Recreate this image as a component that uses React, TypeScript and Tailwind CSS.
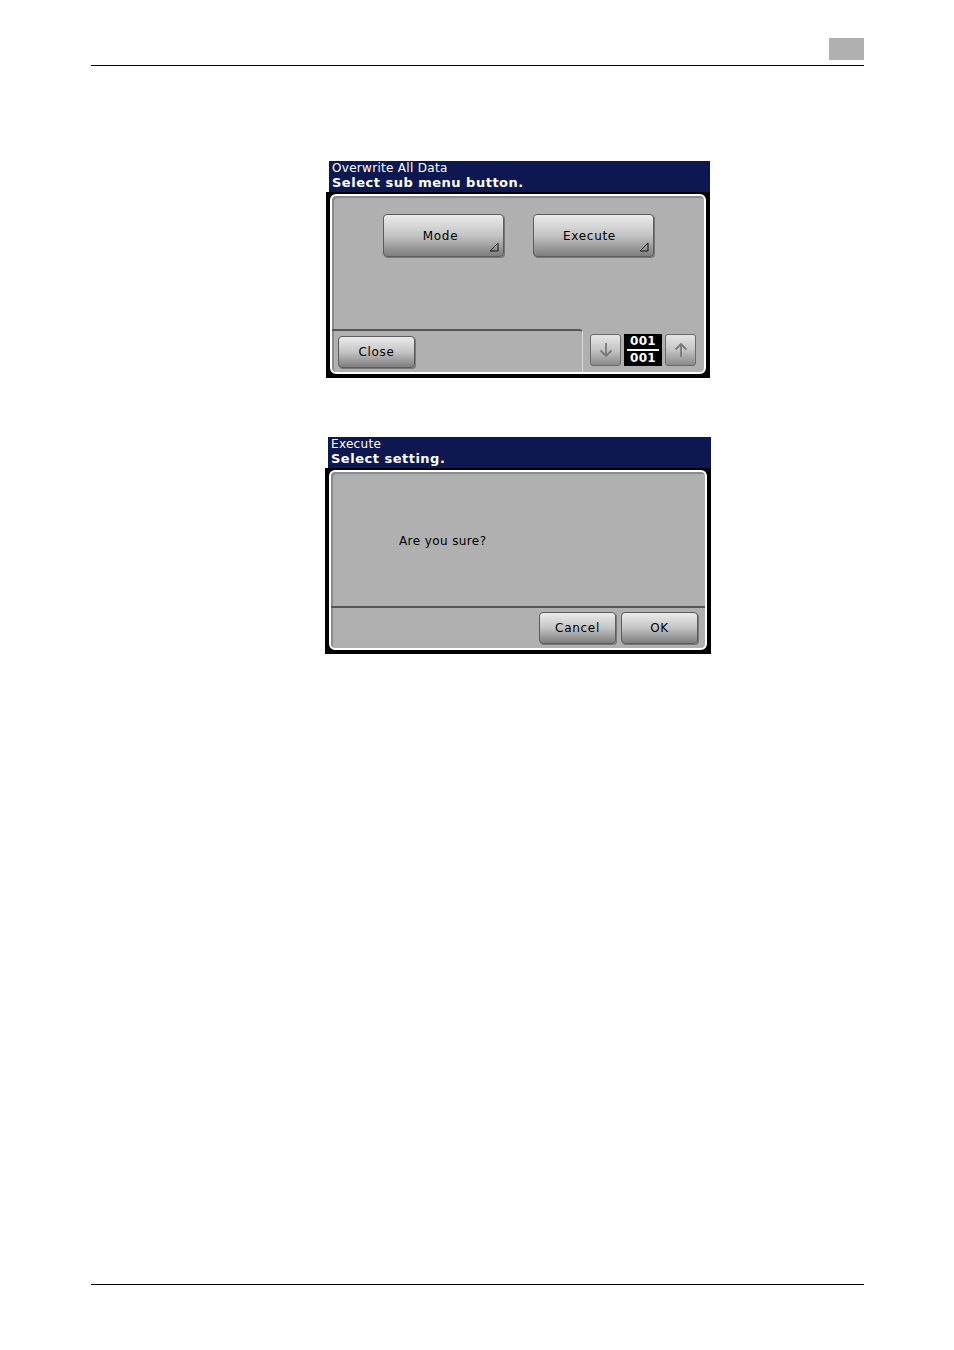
import React from 'react';

const font = { fontFamily: '"DejaVu Sans", Verdana, sans-serif' };

function Corner() {
  return (
    <svg width="10" height="10" viewBox="0 0 10 10" className="absolute right-[4px] bottom-[4px]">
      <polygon points="9,1 9,9 1,9" fill="none" stroke="#111" strokeWidth="1" />
    </svg>
  );
}

function Btn({ label, w, h, corner, className = '' }: { label: string; w: string; h: string; corner?: boolean; className?: string }) {
  return (
    <div
      className={`relative flex items-center justify-center rounded-[4px] border border-[#5c5c5c] bg-gradient-to-b from-[#ebebeb] via-[#c4c4c4] to-[#7e7e7e] text-[12px] tracking-[0.7px] text-black shadow-[1px_1px_0_#777] ${w} ${h} ${className}`}
    >
      {label}
      {corner && <Corner />}
    </div>
  );
}

function Arrow({ up }: { up?: boolean }) {
  return (
    <div className="flex h-[32px] w-[31px] items-center justify-center rounded-[3px] border border-[#6a6a6a] bg-gradient-to-b from-[#e6e6e6] via-[#c4c4c4] to-[#8a8a8a]">
      <svg width="14" height="16" viewBox="0 0 14 16" className={up ? 'rotate-180' : ''}>
        <path d="M7 1 V14 M1.5 8.5 L7 14 L12.5 8.5" fill="none" stroke="#7a7a7a" strokeWidth="1.8" />
      </svg>
    </div>
  );
}

function Title({ small, big }: { small: string; big: string }) {
  return (
    <div className="ml-[3px] h-[31px] bg-[#0e1850] px-[3px] pt-[1px] text-white">
      <div className="text-[12px] leading-[13px] tracking-[0.3px]">{small}</div>
      <div className="text-[13px] font-bold leading-[16px] tracking-[0.5px]">{big}</div>
    </div>
  );
}

function Frame({ children }: { children: React.ReactNode }) {
  return (
    <div className="bg-black pt-[2px] pr-[4px] pb-[4px] pl-[4px]">
      <div className="h-[180px] overflow-hidden rounded-[6px] border-2 border-white bg-[#b0b0b0] shadow-[inset_2px_2px_1px_#8a8a8a]">
        {children}
      </div>
    </div>
  );
}

export default function App() {
  return (
    <div className="flex h-[1350px] w-[954px] flex-col bg-white" style={font}>
      <div className="mx-[90px] ml-[91px] flex h-[66px] justify-end border-b border-black pt-[38px]">
        <div className="h-[22px] w-[35px] bg-[#b0b0b0]" />
      </div>

      <div className="ml-[326px] mt-[95px] w-[384px]">
        <Title small="Overwrite All Data" big="Select sub menu button." />
        <Frame>
          <div className="flex h-[133px] gap-[29px] pl-[51px] pt-[18px]">
            <Btn label="Mode" w="w-[121px]" h="h-[43px]" corner className="pr-[6px]" />
            <Btn label="Execute" w="w-[121px]" h="h-[43px]" corner className="pr-[8px]" />
          </div>
          <div className="flex h-[43px]">
            <div className="w-[251px] rounded-tr-[4px] border-t-2 border-r border-t-[#555] border-r-[#d8d8d8] pl-[6px] pt-[5px]">
              <Btn label="Close" w="w-[77px]" h="h-[32px]" />
            </div>
            <div className="flex gap-[3px] pl-[7px] pt-[5px]">
              <Arrow />
              <div className="flex h-[32px] w-[38px] flex-col items-center justify-center bg-black text-[12px] font-bold leading-[13px] tracking-[0.3px] text-white">
                <span>001</span>
                <span className="my-[1px] h-[2px] w-[32px] bg-white" />
                <span>001</span>
              </div>
              <Arrow up />
            </div>
          </div>
        </Frame>
      </div>

      <div className="ml-[325px] mt-[59px] w-[386px]">
        <Title small="Execute" big="Select setting." />
        <Frame>
          <div className="h-[136px] border-b-2 border-[#555] pl-[68px] pt-[60px] text-[12px] tracking-[0.4px] text-black">
            Are you sure?
          </div>
          <div className="flex justify-end gap-[5px] pr-[7px] pt-[4px]">
            <Btn label="Cancel" w="w-[77px]" h="h-[32px]" />
            <Btn label="OK" w="w-[77px]" h="h-[32px]" />
          </div>
        </Frame>
      </div>

      <div className="mx-[90px] ml-[91px] mt-auto h-[66px] border-t border-black" />
    </div>
  );
}
